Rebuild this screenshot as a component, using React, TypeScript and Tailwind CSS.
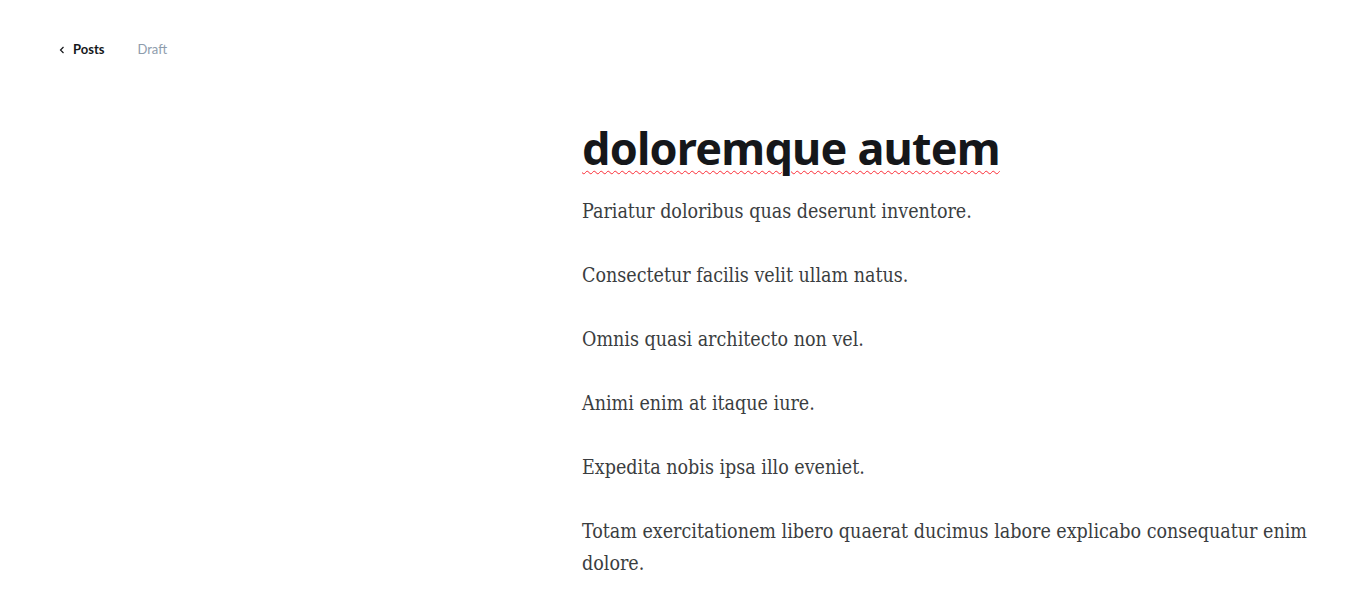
import React from 'react'

const paragraphs = [
  'Pariatur doloribus quas deserunt inventore.',
  'Consectetur facilis velit ullam natus.',
  'Omnis quasi architecto non vel.',
  'Animi enim at itaque iure.',
  'Expedita nobis ipsa illo eveniet.',
  'Totam exercitationem libero quaerat ducimus labore explicabo consequatur enim dolore.',
]

export default function App() {
  return (
    <div className="min-h-screen bg-white">
      <header className="flex items-center h-[98px] pl-[58px] pt-[1px] font-['Lato',sans-serif] text-[13px]">
        <a className="flex items-center gap-[7px] font-bold text-[#15171a]">
          <svg width="8" height="8" viewBox="0 0 8 8" fill="none" stroke="currentColor" strokeWidth="1.2">
            <path d="M5.5 1 L2.5 4 L5.5 7" />
          </svg>
          Posts
        </a>
        <span className="ml-[33px] text-[#8e9cac]">Draft</span>
      </header>
      <main className="pl-[582px] pr-[40px] pt-[25px]">
        <h1 className="font-['Noto_Sans',sans-serif] font-bold text-[45px] leading-[1.1] text-[#15171a] tracking-[-0.018em] underline decoration-wavy decoration-red-500 decoration-1 underline-offset-[5px]">
          doloremque autem
        </h1>
        <div className="mt-[23px] font-['DejaVu_Serif_Condensed','DejaVu_Serif',serif] text-[19.5px] leading-[32px] text-[#3a3d40]">
          {paragraphs.map((p) => (
            <p key={p} className="mb-[32px]">{p}</p>
          ))}
        </div>
      </main>
    </div>
  )
}
